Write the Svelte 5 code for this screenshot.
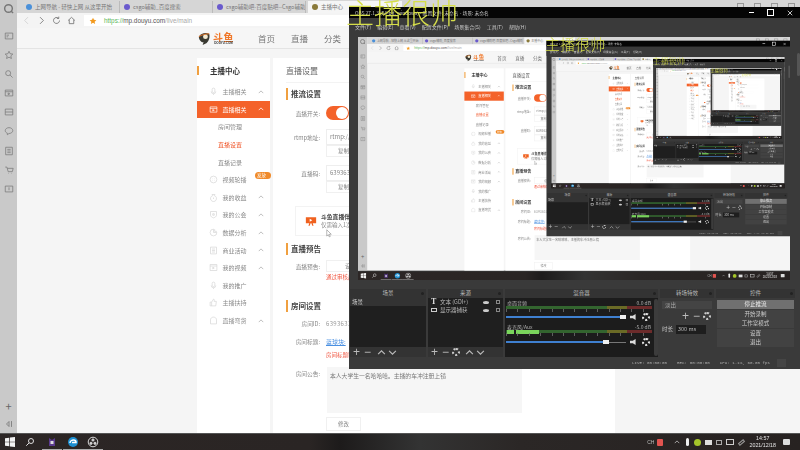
<script lang="ts">
  const MAX_DEPTH = 5;

  const tabs = [
    { label: '上网导航 - 轻快上网 从这里开始', w: 98, dot: '#4a90d9' },
    { label: 'csgo辅助_百度搜索', w: 93, dot: '#6a5acd' },
    { label: 'csgo辅助吧-百度贴吧--Csgo辅助', w: 93, dot: '#6a5acd' }
  ];

  const railIcons = ['panel', 'star', 'search', 'play', 'card', 'chat', 'doc', 'cart', 'book'];

  const sideItems = [
    { label: '主播相关', icon: 'mic', chevron: true },
    { label: '直播相关', icon: 'play', chevron: true, active: true },
    { label: '房间管理', sub: true },
    { label: '直播设置', sub: true, current: true },
    { label: '直播记录', sub: true },
    { label: '视频轮播', icon: 'dots', badge: '发放' },
    { label: '我的收益', icon: 'coin', chevron: true },
    { label: '我的公会', icon: 'shield', chevron: true },
    { label: '数据分析', icon: 'pie', chevron: true },
    { label: '商业活动', icon: 'doc', chevron: true },
    { label: '我的视频', icon: 'video', chevron: true },
    { label: '我的推广', icon: 'mic' },
    { label: '主播扶持', icon: 'thumb' },
    { label: '直播弯货', icon: 'bag', chevron: true }
  ];

  const menus = ['文件(F)', '编辑(E)', '查看(V)', '配置文件(P)', '场景集合(S)', '工具(T)', '帮助(H)'];
  const controls = ['停止推流', '开始录制', '工作室模式', '设置', '退出'];

  const paths: Record<string, string> = {
    panel: 'M1.5 2.5h9v7h-9z M3 5h3 M3 7h2',
    star: 'M6 1.5l1.4 3 3.2.4-2.4 2.1.7 3.2L6 8.6l-2.9 1.6.7-3.2-2.4-2.1 3.2-.4z',
    search: 'M5 2a3 3 0 1 0 0 6 3 3 0 0 0 0-6z M7.3 7.3l3 3',
    play: 'M1.5 2.5h9v7h-9z M1.5 4.5h9 M5 6l2 1-2 1z',
    card: 'M1.5 2.5h9v7h-9z M1.5 6h9',
    chat: 'M6 2c2.500 0 4.500 1.500 4.500 3.500S8.500 9 6 9l-2 1.500V8.500C2.500 8 1.500 7 1.500 5.500 1.500 3.500 3.500 2 6 2z',
    doc: 'M2 1.500h8v9H2z M4 4h4 M4 6h4 M4 8h4',
    cart: 'M1.500 2.500h2l1.500 5.500h5l1-4H4 M5 10h.5 M9 10h.5',
    book: 'M1.500 2.500h9v7h-9z M6 4v3.500',
    mic: 'M6 1.500a1.800 1.800 0 0 1 1.800 1.800v2.400a1.800 1.800 0 0 1-3.600 0V3.300A1.800 1.800 0 0 1 6 1.500z M3 6a3 3 0 0 0 6 0 M6 9v1.500',
    dots: 'M6 1.500a4.500 4.500 0 1 0 0 9 4.500 4.500 0 0 0 0-9z M4 5h.5 M7.500 5H8 M4 7.500h.5 M7.500 7.500H8',
    coin: 'M4 2h4l-1 1.500a4 4 0 1 1-2 0z M6 6v2',
    shield: 'M2 2h8v5c0 1.500-2 3-4 3.500C4 10 2 8.500 2 7z M5 5h2v2H5z',
    pie: 'M6 1.500a4.500 4.500 0 1 0 4.500 4.500H6z M7.500 1.500v3h3',
    video: 'M1.500 2h9v8h-9z M1.500 4h9 M5 5.500l2 1.200-2 1.200z',
    thumb: 'M1.500 5.500h2v5h-2z M3.500 5.500L6 1.500c1 0 1.200.8 1 1.800L6.800 4.500h3L9 10.500H3.500',
    bag: 'M2 5c0-2 1.800-3.500 4-3.500S10 3 10 5v5.500H2z'
  };
</script>

{#snippet icon(name: string, cls: string)}
  <svg class={cls} viewBox="0 0 12 12" fill="none" stroke="currentColor" stroke-width="0.9"><path d={paths[name]} /></svg>
{/snippet}

{#snippet chevron(cls: string)}
  <svg class={cls} viewBox="0 0 8 8" fill="none" stroke="currentColor" stroke-width="1"><path d="M1 5.500l3-3 3 3" /></svg>
{/snippet}

{#snippet row(label: string, cls: string, value: string)}
  <div class="row {cls}">
    <span class="row-label">{label}</span>
    <span class="row-value">{value}</span>
  </div>
{/snippet}

{#snippet browser()}
  <div class="browser">
    <div class="rail">
      <svg class="rail-search" viewBox="0 0 12 12" fill="none" stroke="#777" stroke-width="1.6"><circle cx="6" cy="6" r="4.200" /><path d="M9 9l2 2" /></svg>
      <div class="rail-icons">
        {#each railIcons as name}
          {@render icon(name, 'rail-icon')}
        {/each}
      </div>
      <div class="rail-bottom">
        <span class="rail-plus">+</span>
        <svg class="rail-icon" viewBox="0 0 12 12" fill="none" stroke="currentColor" stroke-width="1"><path d="M6 3L3 6l3 3z M9 2.500v7" /></svg>
      </div>
    </div>

    <div class="browser-main">
      <div class="tabbar">
        {#each tabs as tab}
          <div class="tab" style="width:{tab.w}px">
            <i class="tab-dot" style="background:{tab.dot}"></i>
            <span>{tab.label}</span>
          </div>
        {/each}
        <div class="tab active">
          <i class="tab-dot orange"></i>
          <span>主播中心</span>
        </div>
        <div class="win-controls"><i></i><i></i><i></i><i></i></div>
      </div>

      <div class="toolbar">
        <svg class="nav-btn faint" viewBox="0 0 12 12" fill="none" stroke="currentColor" stroke-width="1"><path d="M8 1.500L3.500 6 8 10.500" /></svg>
        <svg class="nav-btn" viewBox="0 0 12 12" fill="none" stroke="currentColor" stroke-width="1"><path d="M4 1.500L8.500 6 4 10.500" /></svg>
        <svg class="nav-btn" viewBox="0 0 12 12" fill="none" stroke="currentColor" stroke-width="1"><path d="M10 6a4 4 0 1 1-1.300-3 M9 .8V3.300H6.500" /></svg>
        <svg class="nav-btn" viewBox="0 0 12 12" fill="none" stroke="currentColor" stroke-width="1"><path d="M1.500 6L6 1.800 10.500 6 M3 5v5.200h6V5" /></svg>
        <div class="address">
          <svg class="addr-star" viewBox="0 0 12 12" fill="#f39a1e"><path d="M6 1l1.500 3.300 3.500.4-2.600 2.300.8 3.500L6 8.700l-3.200 1.800.8-3.500L1 4.700l3.500-.4z" /></svg>
          <span class="scheme">https://</span><span class="host">mp.douyu.com</span><span class="path">/live/main</span>
        </div>
      </div>

      <div class="page">
        <header class="page-head">
          <div class="logo">
            <svg class="logo-fish" viewBox="0 0 16 16"><path d="M2 6c2-4 8-5 11-3 1 3 0 8-3 10L6 15l1-3C4 12 2 9 2 6z" fill="#3a3a32" /><circle cx="9" cy="6" r="2.600" fill="#f3e9d0" /><path d="M2 6c3-2 7-3 11-3" stroke="#f07a28" fill="none" /></svg>
            <div class="logo-text"><b>斗鱼</b><small>DOUYU.COM</small></div>
          </div>
          <nav class="page-nav"><span>首页</span><span>直播</span><span>分类</span></nav>
        </header>

        <div class="page-body">
          <aside class="side">
            <div class="side-title">主播中心</div>
            {#each sideItems as item}
              <div class="side-item" class:active={item.active} class:sub={item.sub} class:current={item.current}>
                {#if item.icon}{@render icon(item.icon, 'side-icon')}{/if}
                <span>{item.label}</span>
                {#if item.badge}<em class="badge">{item.badge}</em>{/if}
                {#if item.chevron}{@render chevron('side-chevron')}{/if}
              </div>
            {/each}
          </aside>

          <main class="main">
            <div class="main-title">直播设置</div>
            <h3 class="section first">推流设置</h3>

            <div class="row toggle-row">
              <span class="row-label">直播开关:</span>
              <span class="toggle"><i></i></span>
            </div>
            {@render row('rtmp地址:', 'input-row m9', 'rtmp://send3.douyu.com/live')}
            <div class="copy-row"><span class="copy">复制</span></div>
            {@render row('直播码:', 'input-row m8', '6393631rNAnKdWx')}
            <div class="copy-row"><span class="copy">复制</span></div>

            <div class="promo">
              <svg class="promo-icon" viewBox="0 0 14 12" fill="#f0611f"><path d="M1 1h12v7H9l1 3H8.500L7.500 8h-1l-1 3H4l1-3H1z" /><path d="M5.500 2.800l3 1.700-3 1.700z" fill="#fff" /></svg>
              <div class="promo-text">
                <b>斗鱼直播伴侣</b>
                <span>仅需输入1次推流码</span>
              </div>
              <svg class="mouse" viewBox="0 0 8 12"><path d="M1 1v8.500l2-2 1.300 3 1.400-.6-1.300-2.900H7z" fill="#fff" stroke="#777" stroke-width="0.7" /></svg>
            </div>

            <h3 class="section">直播预告</h3>
            <div class="row m5 short-row">
              <span class="row-label">直播预告:</span>
              <span class="copy preview-btn">设置预告</span>
            </div>
            <div class="hint">通过审核后可显示预告信息</div>

            <h3 class="section room">房间设置</h3>
            <div class="row m5 short-row">
              <span class="row-label">房间ID:</span>
              <span class="plain">6393631</span>
            </div>
            <div class="row m6 short-row">
              <span class="row-label">房间标题:</span>
              <span class="link">蓝球块:</span>
            </div>
            <div class="hint m4">房间标题审核后生效</div>
            <div class="row notice-row">
              <span class="row-label">房间公告:</span>
              <div class="notice">本人大学生一名哈哈哈。主播的车冲注册上镜</div>
            </div>
            <div class="save-row"><span class="copy save">修改</span></div>
          </main>
        </div>
      </div>
    </div>
  </div>
{/snippet}

{#snippet taskbar()}
  <div class="taskbar">
    <svg class="tb-win" viewBox="0 0 12 12" fill="#f2f2f2"><path d="M1 2.300l4.300-.6v4H1z M6 1.600l5-.7v4.800H6z M1 6.300h4.300v4L1 9.700z M6 6.300h5v4.800l-5-.7z" /></svg>
    <svg class="tb-search" viewBox="0 0 12 12" fill="none" stroke="#ddd" stroke-width="1.200"><circle cx="7.200" cy="4.800" r="3" /><path d="M5 7L1.500 10.500" /></svg>
    <span class="tb-app"><svg viewBox="0 0 12 12"><path d="M3 2l3 2 3-2v8H3z" fill="#5b3a8e" /><path d="M4.500 5h3v3h-3z" fill="#ddd" /></svg></span>
    <span class="tb-app"><svg viewBox="0 0 12 12"><circle cx="6" cy="6" r="5" fill="#1d8fd1" /><path d="M3 7c0-2 2-3 3.500-3C8 4 9 5 9 6.500H5" fill="none" stroke="#fff" stroke-width="1.500" /></svg></span>
    <span class="tb-app"><svg viewBox="0 0 12 12" fill="none" stroke="#d8d8d8"><circle cx="6" cy="6" r="4.800" /><circle cx="6" cy="4" r="1.100" fill="#d8d8d8" /><circle cx="4" cy="7.300" r="1.100" fill="#d8d8d8" /><circle cx="8" cy="7.300" r="1.100" fill="#d8d8d8" /></svg></span>

    <div class="tray">
      <span class="tray-lang">CH</span>
      <i class="tray-red"></i>
      <svg class="tray-up" viewBox="0 0 8 8" fill="none" stroke="#ccc"><path d="M1 5.500l3-3 3 3" /></svg>
      <i class="tray-mic"></i>
      <i class="tray-green"></i>
      <i class="tray-folder"></i>
      <i class="tray-box"></i>
      <i class="tray-box wide"></i>
      <i class="tray-box thin"></i>
      <div class="clock"><span>14:57</span><span>2021/12/18</span></div>
      <i class="tray-note"></i>
    </div>
  </div>
{/snippet}

{#snippet obs(depth: number)}
  <div class="obs">
    <div class="obs-title">
      <span class="obs-name">OBS 27.1.3 (64-bit, windows) - 配置文件: 未命名 - 场景: 未命名</span>
      <span class="obs-winbtns">
        <i class="min"></i><i class="max"></i>
        <svg viewBox="0 0 8 8" stroke="#fff"><path d="M1 1l6 6 M7 1L1 7" /></svg>
      </span>
    </div>
    <div class="obs-menu">
      {#each menus as m}<span>{m}</span>{/each}
    </div>
    <div class="obs-preview">
      <div class="obs-preview-inner">
        {@render desktop(depth + 1)}
      </div>
    </div>

    <div class="docks">
      <section class="dock scenes">
        <div class="dock-head">场景<i></i></div>
        <div class="dock-list"><div class="scene-item">场景</div></div>
        <div class="dock-tools">
          <span class="t-sym">+</span><span class="t-sym">−</span>
          <svg viewBox="0 0 8 8" fill="none" stroke="#bbb"><path d="M1 5.500l3-3 3 3" /></svg>
          <svg viewBox="0 0 8 8" fill="none" stroke="#bbb"><path d="M1 2.500l3 3 3-3" /></svg>
        </div>
      </section>

      <section class="dock sources">
        <div class="dock-head">来源<i></i></div>
        <div class="dock-list">
          <div class="source-item"><b class="src-t">T</b><span>文本 (GDI+)</span><i class="eye"></i><i class="lock"></i></div>
          <div class="source-item"><i class="src-mon"></i><span>显示器捕获</span><i class="eye"></i><i class="lock"></i></div>
        </div>
        <div class="dock-tools">
          <span class="t-sym">+</span><span class="t-sym">−</span>
          <i class="gear"></i>
          <svg viewBox="0 0 8 8" fill="none" stroke="#bbb"><path d="M1 5.500l3-3 3 3" /></svg>
          <svg viewBox="0 0 8 8" fill="none" stroke="#bbb"><path d="M1 2.500l3 3 3-3" /></svg>
        </div>
      </section>

      <section class="dock mixer">
        <div class="dock-head">混音器<i></i></div>
        <div class="mixer-body">
          <div class="tracks">
            <div class="track">
              <div class="track-head"><span>桌面音频</span><span>0.0 dB</span></div>
              <div class="meter"></div>
              <div class="ticks"></div>
              <div class="slider-row">
                <div class="slider"><span style="width:114px"></span><i></i></div>
                <i class="speaker"></i><i class="gear big"></i>
              </div>
            </div>
            <div class="track">
              <div class="track-head"><span>麦克风/Aux</span><span>-5.0 dB</span></div>
              <div class="meter"><span class="level"></span></div>
              <div class="ticks"></div>
              <div class="slider-row">
                <div class="slider"><span style="width:97px"></span><i></i></div>
                <i class="speaker"></i><i class="gear big"></i>
              </div>
            </div>
          </div>
          <div class="mixer-scroll"></div>
        </div>
      </section>

      <section class="dock transitions">
        <div class="dock-head">转场特效<i></i></div>
        <div class="trans-body">
          <div class="trans-select">淡出</div>
          <div class="trans-tools"><span class="t-sym">+</span><span class="t-sym">−</span><i class="gear"></i></div>
          <div class="trans-duration"><span>时长</span><span class="trans-input">300 ms</span></div>
        </div>
      </section>

      <section class="dock ctrl">
        <div class="dock-head">控件<i></i></div>
        <div class="ctrl-body">
          {#each controls as c, i}
            <div class="ctrl-btn" class:on={i === 0}>{c}</div>
          {/each}
        </div>
      </section>
    </div>

    <div class="obs-status">
      <span>LIVE: 00:00:00</span>
      <span>REC: 00:00:00</span>
      <span>CPU: 1.1%, 60.00 fps</span>
      <i></i>
    </div>
    <div class="obs-scroll"></div>
  </div>
{/snippet}

{#snippet desktop(depth: number)}
  <div class="desktop">
    {@render browser()}
    {@render taskbar()}
    {#if depth < MAX_DEPTH}
      {@render obs(depth)}
    {/if}
    <div class="stream-text">主播很帅</div>
  </div>
{/snippet}

<div class="screen">
  {@render desktop(1)}
</div>

<style>
  :global(body) {
    margin: 0;
    overflow: hidden;
    background: #f5f5f5;
  }
  .screen {
    width: 800px;
    height: 450px;
    overflow: hidden;
    filter: blur(0.75px);
    font-family: "Noto Sans CJK SC", "Liberation Sans", sans-serif;
  }
  .desktop {
    position: relative;
    width: 800px;
    height: 450px;
    overflow: hidden;
    display: flex;
    flex-direction: column;
  }
  i { display: block; }

  /* browser */
  .browser {
    flex: 1;
    min-height: 0;
    display: flex;
    background: #f5f5f5;
  }
  .rail {
    width: 17px;
    flex: none;
    background: #c9c9c9;
    color: #777;
    display: flex;
    flex-direction: column;
    align-items: center;
    padding-top: 3px;
  }
  .rail-search { width: 11px; height: 11px; }
  .rail-icons {
    margin-top: 17px;
    display: flex;
    flex-direction: column;
    align-items: center;
    gap: 9.100px;
  }
  :global(.rail-icon) { width: 10px; height: 10px; color: #777; }
  .rail-bottom {
    margin-top: auto;
    padding-bottom: 4px;
    display: flex;
    flex-direction: column;
    align-items: center;
    gap: 7px;
  }
  .rail-plus { font-size: 11px; line-height: 12px; color: #666; }
  .browser-main { flex: 1; min-width: 0; display: flex; flex-direction: column; }

  .tabbar {
    height: 13px;
    flex: none;
    background: #d6d6d6;
    display: flex;
    align-items: flex-end;
    font-size: 5.500px;
    color: #777;
    padding-left: 5px;
    position: relative;
  }
  .tab {
    height: 12px;
    display: flex;
    align-items: center;
    gap: 3px;
    padding-left: 4px;
    box-sizing: border-box;
    white-space: nowrap;
    overflow: hidden;
    border-right: 1px solid #bbb;
  }
  .tab.active {
    width: 94px;
    background: #f5f5f5;
    border: 0;
    margin-left: 2px;
  }
  .tab-dot { width: 6px; height: 6px; border-radius: 50%; flex: none; }
  .tab-dot.orange { background: #8a7a3a; }
  .win-controls {
    margin-left: auto;
    display: flex;
    gap: 10px;
    height: 10px;
    padding: 0 5px 0 0;
    align-self: flex-start;
    margin-top: 3px;
  }
  .win-controls i { width: 5px; height: 4px; border: 1px solid #999; }

  .toolbar {
    height: 15px;
    flex: none;
    background: #f4f4f4;
    display: flex;
    align-items: center;
    padding-left: 5px;
    gap: 6px;
    box-sizing: border-box;
  }
  .nav-btn { width: 9px; height: 9px; color: #666; flex: none; }
  .nav-btn.faint { color: #ccc; }
  .address {
    flex: 1;
    height: 11px;
    margin-left: 2px;
    background: #fff;
    display: flex;
    align-items: center;
    padding-left: 5px;
    font-size: 6.400px;
    font-family: "Liberation Sans", sans-serif;
    color: #aaa;
  }
  .addr-star { width: 8px; height: 8px; margin-right: 7px; }
  .scheme { color: #5cb85c; }
  .host { color: #555; }

  .page { flex: 1; min-height: 0; display: flex; flex-direction: column; }
  .page-head {
    height: 21px;
    flex: none;
    background: #f6f6f6;
    border-bottom: 1px solid #e4e4e4;
    box-sizing: border-box;
    display: flex;
    align-items: center;
    padding-left: 180px;
  }
  .logo { width: 61px; display: flex; align-items: center; gap: 1px; }
  .logo-fish { width: 15px; height: 15px; }
  .logo-text { display: flex; flex-direction: column; align-items: center; line-height: 1; }
  .logo-text b { font-size: 10px; color: #f0782a; letter-spacing: 0.500px; line-height: 10px; }
  .logo-text small { font-size: 3px; color: #333; font-weight: 700; font-family: "Liberation Sans", sans-serif; }
  .page-nav { display: flex; gap: 16px; font-size: 8.500px; color: #777; }

  .page-body {
    flex: 1;
    min-height: 0;
    display: flex;
    padding: 9px 0 0 180px;
    gap: 3px;
  }
  .side {
    width: 73px;
    flex: none;
    background: #fff;
    font-size: 6px;
    color: #8a8a8a;
  }
  .side-title {
    height: 25px;
    display: flex;
    align-items: center;
    font-size: 7.500px;
    font-weight: 700;
    color: #333;
    padding-left: 11px;
    position: relative;
    box-sizing: border-box;
    border-left: 2px solid #f0a040;
    border-image: linear-gradient(transparent 32%, #f0a040 32%, #f0a040 68%, transparent 68%) 1;
  }
  .side-item {
    height: 17.600px;
    display: flex;
    align-items: center;
    padding-left: 12px;
    gap: 4.500px;
    position: relative;
  }
  .side-item.sub { padding-left: 21px; }
  .side-item.current { color: #f0562a; }
  .side-item.active { background: #f4622a; color: #fff; }
  :global(.side-icon) { width: 9px; height: 9px; color: #d4d4d4; flex: none; }
  .side-item.active :global(.side-icon) { color: #fff; }
  :global(.side-chevron) {
    width: 6px;
    height: 6px;
    position: absolute;
    right: 6px;
    color: #aaa;
  }
  .side-item.active :global(.side-chevron) { color: #fff; }
  .badge {
    position: absolute;
    left: 58px;
    top: 1px;
    font-style: normal;
    font-size: 4.500px;
    background: #f08a2a;
    color: #fff;
    border-radius: 4px;
    padding: 0 2px;
    line-height: 7px;
    width: 12px;
  }

  .main {
    width: 342px;
    flex: none;
    background: #fff;
    padding-left: 13px;
    box-sizing: border-box;
    color: #888;
    font-size: 6px;
  }
  .main-title {
    height: 25px;
    display: flex;
    align-items: center;
    font-size: 8px;
    color: #666;
    border-bottom: 1px solid #f3f3f3;
    box-sizing: border-box;
  }
  .section {
    margin: 7px 0 0;
    height: 12px;
    font-size: 7.500px;
    line-height: 12px;
    font-weight: 700;
    color: #444;
    padding-left: 3px;
    border-left: 2px solid #f0a040;
  }
  .section.first { margin-top: 5px; }
  .section.room { margin-top: 19px; }
  .row { display: flex; align-items: center; gap: 6px; }
  .row-label { width: 34px; flex: none; text-align: right; white-space: nowrap; font-size: 5.700px; }
  .toggle-row { height: 14px; margin-top: 6px; }
  .toggle {
    width: 23px;
    height: 14px;
    border-radius: 7px;
    background: #f4622a;
    display: flex;
    justify-content: flex-end;
    align-items: center;
    padding-right: 1px;
    box-sizing: border-box;
  }
  .toggle i { width: 12px; height: 12px; border-radius: 50%; background: #fff; }
  :global(.input-row) { height: 16px; }
  :global(.input-row.m9) { margin-top: 9px; }
  :global(.input-row.m8) { margin-top: 8px; }
  .row-value {
    width: 220px;
    height: 16px;
    border: 1px solid #eee;
    box-sizing: border-box;
    padding-left: 3px;
    line-height: 14px;
    font-size: 6px;
    color: #888;
  }
  .copy-row { height: 12px; padding-left: 40px; }
  .copy {
    display: block;
    width: 35px;
    height: 12px;
    box-sizing: border-box;
    border: 1px solid #f0f0f0;
    text-align: center;
    line-height: 10px;
    font-size: 5.500px;
    color: #888;
  }
  .promo {
    position: relative;
    margin: 13px 0 0 9px;
    width: 190px;
    height: 30px;
    box-sizing: border-box;
    border: 1px solid #f3f3f3;
    display: flex;
    align-items: center;
    gap: 4px;
    padding-left: 9px;
  }
  .promo-icon { width: 12px; height: 11px; }
  .promo-text { display: flex; flex-direction: column; line-height: 8px; font-size: 5.500px; }
  .promo-text b { color: #444; font-size: 5.800px; }
  .mouse { position: absolute; left: 30px; top: 22px; width: 6px; height: 9px; }
  .m5 { margin-top: 5px; }
  .m6 { margin-top: 6px; }
  .short-row { height: 12px; }
  .preview-btn { width: 60px; }
  .plain { font-size: 6px; color: #999; letter-spacing: 0.300px; }
  .link { color: #4a90e2; font-size: 6px; text-decoration: underline; }
  .hint {
    margin: 1px 0 0 40px;
    height: 8px;
    line-height: 8px;
    color: #f0503a;
    font-size: 5.500px;
  }
  .hint.m4 { margin-top: 4px; }
  .notice-row { margin-top: 8px; align-items: flex-start; height: 46px; gap: 7px; }
  .notice-row .row-label { margin-top: 2px; }
  .notice {
    width: 195px;
    height: 46px;
    background: #f6f6f6;
    padding: 5px 3px;
    box-sizing: border-box;
    font-size: 5.800px;
    color: #777;
    white-space: nowrap;
    line-height: 8px;
  }
  .save-row { margin-top: 4px; padding-left: 40px; }
  .save { height: 14px; line-height: 12px; }

  /* taskbar */
  .taskbar {
    height: 17px;
    flex: none;
    background: linear-gradient(90deg, #2c2625 0, #2a2524 310px, #1d1b1b 340px, #333 420px, #2b2726 520px, #272221 800px);
    border-top: 1px solid #555;
    box-sizing: border-box;
    display: flex;
    align-items: center;
    padding-left: 4px;
    color: #ddd;
  }
  .tb-win { width: 12px; height: 12px; margin-right: 9px; }
  .tb-search { width: 10px; height: 10px; margin-right: 7px; }
  .tb-app {
    width: 20px;
    height: 16px;
    margin-right: 0.500px;
    display: flex;
    align-items: center;
    justify-content: center;
    box-sizing: border-box;
    border-bottom: 1px solid #aaa;
  }
  .tb-app svg { width: 12px; height: 12px; }
  .tray {
    margin-left: auto;
    display: flex;
    align-items: center;
    gap: 4px;
    padding-right: 10px;
  }
  .tray-lang { font-size: 5px; color: #bbb; font-family: "Liberation Sans", sans-serif; margin-right: -1px; }
  .tray-red { width: 6px; height: 7px; background: #e25450; border-radius: 1px; margin-right: 7px; }
  .tray-up { width: 6px; height: 6px; }
  .tray-mic { width: 3px; height: 8px; background: #eee; border-radius: 2px; margin: 0 1.500px; }
  .tray-green { width: 7px; height: 7px; border-radius: 50%; background: #a5c52a; }
  .tray-folder { width: 7px; height: 5px; background: #ddd; }
  .tray-box { width: 6px; height: 5px; border: 1px solid #aaa; box-sizing: border-box; }
  .tray-box.wide { width: 8px; height: 6px; border-color: #ccc; }
  .tray-box.thin { width: 7px; height: 3px; border-color: #999; transform: rotate(-40deg); }
  .clock {
    display: flex;
    flex-direction: column;
    align-items: center;
    font-size: 5.300px;
    line-height: 7px;
    color: #e4e4e4;
    font-family: "Liberation Sans", sans-serif;
    margin: 0 3px 0 0;
  }
  .tray-note { width: 7px; height: 6px; background: #ddd; border-radius: 1px; }

  /* obs window, placed on the desktop */
  .obs {
    position: absolute;
    left: 349px;
    top: 7px;
    width: 451px;
    height: 362px;
    background: #3a3a3a;
    display: flex;
    flex-direction: column;
    color: #c4c4c4;
    font-size: 5.500px;
  }
  .obs-title {
    height: 11px;
    flex: none;
    background: #050505;
    display: flex;
    align-items: center;
    padding: 0 6px;
    color: #ccc;
    font-size: 4.800px;
    white-space: nowrap;
    overflow: hidden;
  }
  .obs-winbtns {
    margin-left: auto;
    display: flex;
    align-items: center;
    gap: 13px;
    padding-right: 1px;
  }
  .obs-winbtns .min { width: 5px; height: 1px; background: #fff; }
  .obs-winbtns .max { width: 5px; height: 5px; border: 1px solid #fff; }
  .obs-winbtns svg { width: 6px; height: 6px; }
  .obs-menu {
    height: 17px;
    flex: none;
    background: #3a3a3a;
    display: flex;
    align-items: center;
    gap: 6px;
    padding-left: 6px;
    color: #c8c8c8;
    font-size: 5px;
    white-space: nowrap;
  }
  .obs-preview {
    position: relative;
    flex: none;
    width: 432px;
    height: 243px;
    margin: 2px 0 0 9px;
    overflow: hidden;
    background: #111;
  }
  .obs-preview-inner {
    position: absolute;
    left: 0;
    top: 0;
    width: 800px;
    height: 450px;
    transform: scale(0.54);
    transform-origin: 0 0;
  }
  .obs-scroll {
    position: absolute;
    right: 0;
    top: 46px;
    width: 3px;
    height: 23px;
    background: #555;
    border-radius: 2px;
  }

  .docks {
    margin-top: 9px;
    height: 68px;
    flex: none;
    display: flex;
    gap: 2px;
    padding-left: 1px;
  }
  .dock { display: flex; flex-direction: column; min-width: 0; }
  .scenes { width: 76px; }
  .sources { width: 75px; }
  .mixer { width: 153px; }
  .transitions { width: 54px; }
  .ctrl { width: 79px; }
  .dock-head {
    height: 9px;
    flex: none;
    background: #333;
    text-align: center;
    line-height: 9px;
    color: #b8b8b8;
    position: relative;
  }
  .dock-head i {
    position: absolute;
    right: 2px;
    top: 3px;
    width: 3px;
    height: 3px;
    background: #222;
    border-radius: 50%;
  }
  .dock-list {
    flex: 1;
    background: #1f1f1f;
  }
  .scene-item {
    height: 8px;
    line-height: 8px;
    background: #333;
    padding-left: 2px;
    color: #ccc;
  }
  .source-item {
    height: 8px;
    display: flex;
    align-items: center;
    gap: 3px;
    padding: 0 3px;
    color: #bbb;
    white-space: nowrap;
  }
  .src-t { width: 6px; font-size: 8px; line-height: 8px; color: #ddd; font-family: "Liberation Serif", serif; }
  .src-mon { width: 6px; height: 4px; border: 1px solid #ccc; box-sizing: border-box; }
  .eye { width: 6px; height: 3px; background: #ccc; border-radius: 50%; margin-left: auto; }
  .lock { width: 4px; height: 4px; border: 1px solid #888; box-sizing: border-box; margin-left: 4px; }
  .dock-tools {
    height: 10px;
    flex: none;
    background: #333;
    display: flex;
    align-items: center;
    gap: 2px;
    padding-left: 2px;
    color: #bbb;
  }
  .dock-tools svg { width: 9px; height: 9px; }
  .dock-tools svg:first-of-type { margin-left: 3px; }
  .t-sym { font-size: 12px; line-height: 10px; width: 9px; text-align: center; font-family: "Liberation Sans", sans-serif; color: #bbb; }
  .gear {
    width: 8px;
    height: 8px;
    border: 2px dotted #ccc;
    box-sizing: border-box;
    border-radius: 50%;
    flex: none;
  }
  .gear.big { width: 8px; height: 8px; border: 2.500px dotted #e4e4e4; }

  .mixer-body {
    flex: 1;
    display: flex;
    background: #1c1c1c;
  }
  .tracks { flex: 1; padding: 1px 2px 0 1px; min-width: 0; }
  .mixer-scroll { width: 4px; background: #3c3c3c; border-radius: 2px; margin: 1px 0; }
  .track + .track { margin-top: 1px; }
  .track + .track .slider-row { margin-top: 1px; }
  .track-head {
    height: 7px;
    line-height: 7px;
    display: flex;
    justify-content: space-between;
    padding: 0 1px;
    color: #aaa;
    font-size: 5px;
  }
  .meter {
    position: relative;
    height: 3px;
    background: linear-gradient(90deg, #33652f 0, #33652f 69%, #6b6b26 69%, #6b6b26 83%, #6c2b2b 83%, #6c2b2b 100%);
  }
  .level {
    position: absolute;
    left: 1px;
    top: -0.500px;
    width: 32px;
    height: 4px;
    background: linear-gradient(90deg, #7ad45c 0, #7ad45c 22%, #1d1d1d 22%, #1d1d1d 28%, #7ad45c 28%);
  }
  .ticks {
    height: 3px;
    background: repeating-linear-gradient(90deg, #777 0, #777 1px, transparent 1px, transparent 11.400px);
    opacity: 0.750;
  }
  .slider-row {
    height: 10px;
    display: flex;
    align-items: center;
    gap: 4px;
    padding-right: 2px;
  }
  .slider {
    position: relative;
    flex: 1;
    height: 1px;
    background: #777;
    display: flex;
    align-items: center;
  }
  .slider span { display: block; height: 2.500px; background: #3f80d0; }
  .slider i { width: 6px; height: 4px; background: #f0f0f0; flex: none; }
  .speaker { width: 8px; height: 6px; background: #ddd; clip-path: polygon(0 30%, 35% 30%, 70% 0, 70% 100%, 35% 70%, 0 70%); flex: none; }

  .trans-body { flex: 1; padding: 3px 2px 0; }
  .trans-select {
    height: 8px;
    line-height: 8px;
    background: #444;
    padding-left: 3px;
    color: #aaa;
  }
  .trans-tools {
    display: flex;
    align-items: center;
    justify-content: flex-end;
    gap: 2px;
    height: 14px;
    padding-right: 1px;
  }
  .trans-duration { display: flex; align-items: center; gap: 3px; height: 10px; margin-top: 1px; }
  .trans-input { width: 30px; height: 9px; line-height: 9px; background: #1e1e1e; padding-left: 2px; box-sizing: border-box; color: #bbb; }

  .ctrl-body { flex: 1; padding: 2px 1px 0; display: flex; flex-direction: column; gap: 0.500px; }
  .ctrl-btn {
    height: 9px;
    line-height: 9px;
    background: #424242;
    text-align: center;
    color: #ccc;
  }
  .ctrl-btn.on { background: #707070; color: #eee; }

  .obs-status {
    flex: 1;
    display: flex;
    align-items: center;
    justify-content: flex-end;
    gap: 10px;
    padding-right: 14px;
    font-size: 4.200px;
    color: #aaa;
    font-family: "Liberation Mono", monospace;
    white-space: nowrap;
  }
  .obs-status i { width: 9px; height: 8px; background: #454545; margin-left: -3px; }

  .stream-text {
    position: absolute;
    left: 346px;
    top: -9px;
    font-size: 28px;
    line-height: 42px;
    font-weight: 300;
    color: #d6de4a;
    white-space: nowrap;
  }
</style>
